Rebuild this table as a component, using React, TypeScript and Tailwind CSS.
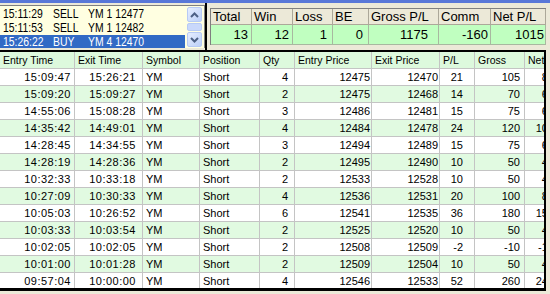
import React from "react";

const orders = [
  { time: "15:11:29", side: "SELL", info: "YM 1 12477" },
  { time: "15:11:53", side: "SELL", info: "YM 1 12482" },
  { time: "15:26:22", side: "BUY", info: "YM 4 12470", selected: true },
];

const summaryCols = [
  { label: "Total", value: "13", w: "w-[41px]", pr: "pr-[3px]" },
  { label: "Win", value: "12", w: "w-[41px]", pr: "pr-[3px]" },
  { label: "Loss", value: "1", w: "w-[40px]", pr: "pr-[5px]" },
  { label: "BE", value: "0", w: "w-[36px]", pr: "pr-[5px]" },
  { label: "Gross P/L", value: "1175", w: "w-[70px]", pr: "pr-[10px]" },
  { label: "Comm", value: "-160", w: "w-[52px]", pr: "pr-[2px]" },
  { label: "Net P/L", value: "1015", w: "w-[55px]", pr: "pr-[1px]" },
];

type Col = { label: string; w: string; align: "left" | "right"; pr?: string; mono?: boolean };

const cols: Col[] = [
  { label: "Entry Time", w: "w-[75px]", align: "right", pr: "pr-[3px]", mono: true },
  { label: "Exit Time", w: "w-[68px]", align: "right", pr: "pr-[6px]", mono: true },
  { label: "Symbol", w: "w-[57px]", align: "left" },
  { label: "Position", w: "w-[60px]", align: "left" },
  { label: "Qty", w: "w-[35px]", align: "right", pr: "pr-[6px]" },
  { label: "Entry Price", w: "w-[77px]", align: "right", pr: "pr-[1px]" },
  { label: "Exit Price", w: "w-[68px]", align: "right", pr: "pr-[1px]" },
  { label: "P/L", w: "w-[35px]", align: "right", pr: "pr-[11px]" },
  { label: "Gross", w: "w-[50px]", align: "right", pr: "pr-[4px]" },
  { label: "Net", w: "w-[33px]", align: "right", pr: "pr-[3px]" },
];

const trades = [
  ["15:09:47", "15:26:21", "YM", "Short", "4", "12475", "12470", "21", "105", "89"],
  ["15:09:20", "15:09:27", "YM", "Short", "2", "12475", "12468", "14", "70", "62"],
  ["14:55:06", "15:08:28", "YM", "Short", "3", "12486", "12481", "15", "75", "63"],
  ["14:35:42", "14:49:01", "YM", "Short", "4", "12484", "12478", "24", "120", "104"],
  ["14:28:45", "14:34:55", "YM", "Short", "3", "12494", "12489", "15", "75", "63"],
  ["14:28:19", "14:28:36", "YM", "Short", "2", "12495", "12490", "10", "50", "42"],
  ["10:32:33", "10:33:18", "YM", "Short", "2", "12533", "12528", "10", "50", "42"],
  ["10:27:09", "10:30:33", "YM", "Short", "4", "12536", "12531", "20", "100", "84"],
  ["10:05:03", "10:26:52", "YM", "Short", "6", "12541", "12535", "36", "180", "156"],
  ["10:03:33", "10:03:54", "YM", "Short", "2", "12525", "12520", "10", "50", "42"],
  ["10:02:05", "10:02:05", "YM", "Short", "2", "12508", "12509", "-2", "-10", "-18"],
  ["10:01:00", "10:01:28", "YM", "Short", "2", "12509", "12504", "10", "50", "42"],
  ["09:57:04", "10:00:00", "YM", "Short", "4", "12546", "12533", "52", "260", "244"],
];

const Arrow = ({ up }: { up?: boolean }) => (
  <svg width="9" height="6" viewBox="0 0 9 6">
    <path
      d={up ? "M1 5 L4.5 1.5 L8 5" : "M1 1 L4.5 4.5 L8 1"}
      fill="none"
      stroke="#4D6185"
      strokeWidth="2"
    />
  </svg>
);

const ScrollButton = ({ up }: { up?: boolean }) => (
  <div className="flex h-[15px] items-center justify-center rounded-[2px] border border-[#B7CAF5] bg-gradient-to-br from-[#E6EEFF] to-[#BCD0F8]">
    <Arrow up={up} />
  </div>
);

// listbox text is a narrow face; squeeze Liberation Sans to match
const Narrow = ({ children }: { children: React.ReactNode }) => (
  <span className="inline-block origin-left scale-x-[0.8] whitespace-nowrap">{children}</span>
);

export default function App() {
  return (
    <div
      className="flex h-[294px] w-[550px] flex-col overflow-hidden bg-[#ECE9D8] text-black"
      style={{ fontFamily: '"Liberation Sans", Arial, sans-serif' }}
    >
      <div className="h-[3px] bg-[#5877D8]" />

      {/* top: order list + summary */}
      <div className="flex h-[47px]">
        <div className="w-[205px] pt-[2px]">
          <div className="flex h-[43px] border-t border-r border-[#7F7F7F] bg-[#FFFFE1]">
            <div className="w-[185px] pt-[1px] text-[13px] leading-[13px]">
              {orders.map((o) => (
                <div
                  key={o.time}
                  className={`mb-[1px] flex h-[13px] items-center ${
                    o.selected ? "bg-[#316AC5] text-white" : ""
                  }`}
                >
                  <span className="w-[53px] shrink-0 pl-[3px]">
                    <Narrow>{o.time}</Narrow>
                  </span>
                  <span className="w-[35px] shrink-0">
                    <Narrow>{o.side}</Narrow>
                  </span>
                  <span className="shrink-0">
                    <Narrow>{o.info}</Narrow>
                  </span>
                </div>
              ))}
            </div>
            <div className="ml-[2px] flex w-[15px] flex-col gap-[1px] pt-[1px]">
              <ScrollButton up />
              <div className="h-[8px] rounded-[2px] border border-[#B7CAF5] bg-[#C9D8FB]" />
              <ScrollButton />
            </div>
          </div>
        </div>
        <div className="w-[2px] bg-black" />
        <div className="flex-1 pl-[3px] pt-[5px]">
          <div className="flex w-fit border-t border-l border-[#7F7F7F]">
            {summaryCols.map((c) => (
              <div key={c.label} className={`${c.w} flex flex-col`}>
                <div className="h-[16px] border-r border-b border-[#ACA899] pl-[2px] text-[13px] leading-[15px]">
                  {c.label}
                </div>
                <div
                  className={`h-[20px] border-r border-b border-[#A8B8A0] bg-[#C0FFC0] text-right text-[13px] leading-[19px] ${c.pr}`}
                >
                  {c.value}
                </div>
              </div>
            ))}
          </div>
        </div>
      </div>

      {/* trade grid */}
      <div className="h-[241px] w-[546px] overflow-hidden border-t-2 border-r-2 border-b-[3px] border-black bg-white">
        <div className="flex h-[17px] w-[558px] bg-[#DDF9DD]">
          {cols.map((c) => (
            <div
              key={c.label}
              className={`${c.w} shrink-0 overflow-hidden whitespace-nowrap border-r border-b border-[#C4C4C4] pl-[3px] text-[10.5px] leading-[16px]`}
            >
              {c.label}
            </div>
          ))}
        </div>
        {trades.map((t, i) => (
          <div
            key={i}
            className={`flex h-[17px] w-[558px] ${i % 2 === 1 ? "bg-[#E1FAE1]" : "bg-white"}`}
          >
            {t.map((v, j) => {
              const c = cols[j];
              return (
                <div
                  key={j}
                  className={`${c.w} shrink-0 overflow-hidden whitespace-nowrap border-r border-b border-[#C4C4C4] text-[11px] leading-[16px] ${
                    c.align === "right" ? `text-right ${c.pr}` : "pl-[3px]"
                  } ${c.mono ? "tracking-[0.5px]" : ""}`}
                >
                  {v}
                </div>
              );
            })}
          </div>
        ))}
      </div>
    </div>
  );
}
